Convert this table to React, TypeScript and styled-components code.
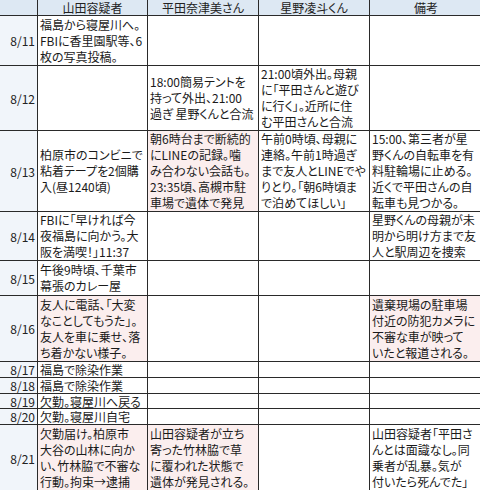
import React from "react";
import styled, { createGlobalStyle } from "styled-components";

const Global = createGlobalStyle`
  html, body { margin: 0; padding: 0; background: #ffffff; }
  body { font-family: "Noto Sans CJK JP", "Noto Sans", sans-serif; }
`;

const Sheet = styled.div`
  display: grid;
  grid-template-columns: 37px 109px 110px 110px 112px;
  grid-template-rows: 15px 49px 64px 80px 48px 34px 65px 15px 15px 14px 15px 66px;
  gap: 1px;
  background: #2a2a2a;
  width: 482px;
  overflow: hidden;
`;

const HeaderCell = styled.div`
  background: #dde8f3;
  color: #222;
  font-size: 12px;
  line-height: 15px;
  text-align: center;
  white-space: nowrap;
  overflow: hidden;
  font-feature-settings: "palt";
`;

const DateCell = styled.div`
  background: #f1f5fa;
  color: #222;
  font-size: 12px;
  display: flex;
  align-items: center;
  justify-content: flex-end;
  padding-right: 2px;
  line-height: 15px;
  overflow: hidden;
`;

const Cell = styled.div<{ $tone: "plain" | "pink" }>`
  background: ${(p) => (p.$tone === "pink" ? "#fbeeee" : "#ffffff")};
  color: #1a1a1a;
  font-size: 12px;
  line-height: 16px;
  display: flex;
  flex-direction: column;
  justify-content: center;
  padding: 0 1px 0 2px;
  overflow: hidden;
  white-space: nowrap;
  font-feature-settings: "palt";
`;

const Line = styled.span<{ $tight?: boolean }>`
  display: block;
  flex: none;
  line-height: ${(p) => (p.$tight ? "15px" : "16px")};
`;

type CellData = { lines: string[]; pink?: boolean };
type Row = { date: string; cells: CellData[]; tight?: boolean };

const E: CellData = { lines: [] };

const rows: Row[] = [
  {
    date: "8/11",
    cells: [
      { lines: ["福島から寝屋川へ。", "FBIに香里園駅等、6", "枚の写真投稿。"] },
      E,
      E,
      E,
    ],
  },
  {
    date: "8/12",
    cells: [
      E,
      { lines: ["18:00簡易テントを", "持って外出、21:00", "過ぎ 星野くんと合流"] },
      { lines: ["21:00頃外出。母親", "に「平田さんと遊び", "に行く」。近所に住", "む平田さんと合流"] },
      E,
    ],
  },
  {
    date: "8/13",
    cells: [
      { lines: ["柏原市のコンビニで", "粘着テープを2個購", "入(昼1240頃)"] },
      {
        lines: ["朝6時台まで断続的", "にLINEの記録。噛", "み合わない会話も。", "23:35頃、高槻市駐", "車場で遺体で発見"],
        pink: true,
      },
      { lines: ["午前0時頃、母親に", "連絡。午前1時過ぎ", "まで友人とLINEでや", "りとり。「朝6時頃ま", "で泊めてほしい」"] },
      { lines: ["15:00、第三者が星", "野くんの自転車を有", "料駐輪場に止める。", "近くで平田さんの自", "転車も見つかる。"] },
    ],
  },
  {
    date: "8/14",
    cells: [
      { lines: ["FBIに「早ければ今", "夜福島に向かう。大", "阪を満喫！」11:37"] },
      E,
      E,
      { lines: ["星野くんの母親が未", "明から明け方まで友", "人と駅周辺を捜索"] },
    ],
  },
  {
    date: "8/15",
    cells: [{ lines: ["午後9時頃、千葉市", "幕張のカレー屋"] }, E, E, E],
  },
  {
    date: "8/16",
    cells: [
      { lines: ["友人に電話、「大変", "なことしてもうた」。", "友人を車に乗せ、落", "ち着かない様子。"], pink: true },
      E,
      E,
      { lines: ["遺棄現場の駐車場", "付近の防犯カメラに", "不審な車が映って", "いたと報道される。"], pink: true },
    ],
  },
  { date: "8/17", tight: true, cells: [{ lines: ["福島で除染作業"] }, E, E, E] },
  { date: "8/18", tight: true, cells: [{ lines: ["福島で除染作業"] }, E, E, E] },
  { date: "8/19", tight: true, cells: [{ lines: ["欠勤。寝屋川へ戻る"] }, E, E, E] },
  { date: "8/20", tight: true, cells: [{ lines: ["欠勤。寝屋川自宅"] }, E, E, E] },
  {
    date: "8/21",
    cells: [
      { lines: ["欠勤届け。柏原市", "大谷の山林に向か", "い、竹林脇で不審な", "行動。拘束→逮捕"], pink: true },
      { lines: ["山田容疑者が立ち", "寄った竹林脇で草", "に覆われた状態で", "遺体が発見される。"], pink: true },
      E,
      { lines: ["山田容疑者「平田さ", "んとは面識なし。同", "乗者が乱暴。気が", "付いたら死んでた」"] },
    ],
  },
];

const headers = ["", "山田容疑者", "平田奈津美さん", "星野凌斗くん", "備考"];

export default function App() {
  return (
    <>
      <Global />
      <Sheet>
        {headers.map((h, i) => (
          <HeaderCell key={`h${i}`}>{h}</HeaderCell>
        ))}
        {rows.map((r) => (
          <React.Fragment key={r.date}>
            <DateCell>{r.date}</DateCell>
            {r.cells.map((c, j) => (
              <Cell key={j} $tone={c.pink ? "pink" : "plain"}>
                {c.lines.map((l, k) => (
                  <Line key={k} $tight={r.tight}>
                    {l}
                  </Line>
                ))}
              </Cell>
            ))}
          </React.Fragment>
        ))}
      </Sheet>
    </>
  );
}
